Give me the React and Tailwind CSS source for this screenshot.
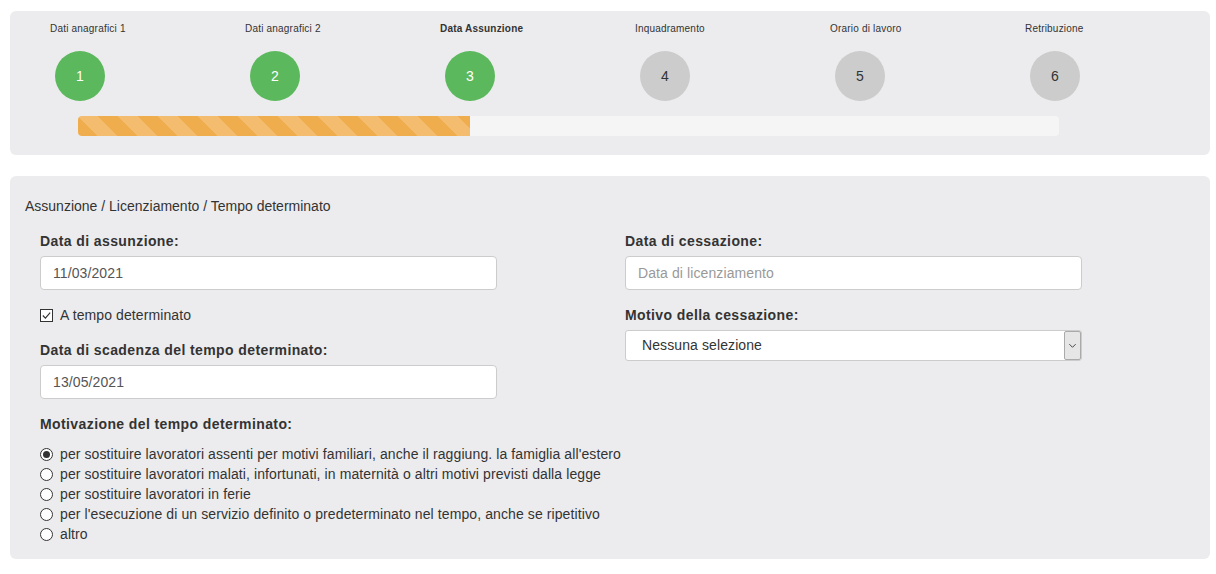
import React from 'react';

const steps = [
  { n: 1, label: 'Dati anagrafici 1', done: true },
  { n: 2, label: 'Dati anagrafici 2', done: true },
  { n: 3, label: 'Data Assunzione', done: true, active: true },
  { n: 4, label: 'Inquadramento' },
  { n: 5, label: 'Orario di lavoro' },
  { n: 6, label: 'Retribuzione' },
];

const motivi = [
  "per sostituire lavoratori assenti per motivi familiari, anche il raggiung. la famiglia all'estero",
  'per sostituire lavoratori malati, infortunati, in maternità o altri motivi previsti dalla legge',
  'per sostituire lavoratori in ferie',
  "per l'esecuzione di un servizio definito o predeterminato nel tempo, anche se ripetitivo",
  'altro',
];

function Radio({ checked }) {
  return (
    <span className="w-[13px] h-[13px] rounded-full border border-[#333] bg-white flex items-center justify-center shrink-0">
      {checked && <span className="w-[7px] h-[7px] rounded-full bg-[#333]" />}
    </span>
  );
}

function Field({ label, children }) {
  return (
    <div>
      <div className="text-[14px] leading-[20px] font-bold tracking-[0.4px] text-[#333] mb-[5px]">{label}</div>
      {children}
    </div>
  );
}

function TextBox({ value, placeholder }) {
  return (
    <div className="w-[457px] h-[34px] bg-white border border-[#ccc] rounded-[4px] px-[12px] flex items-center text-[14px] tracking-[0.1px]">
      {value ? <span className="text-[#555]">{value}</span> : <span className="text-[#999]">{placeholder}</span>}
    </div>
  );
}

export default function App() {
  return (
    <div className="min-h-screen bg-white px-[10px] pt-[11px] text-[#333]" style={{ fontFamily: '"Liberation Sans", Arial, sans-serif' }}>
      {/* Wizard steps */}
      <div className="w-[1200px] h-[144px] bg-[#ececee] rounded-[6px] pt-[11px]">
        <div className="flex pl-[40px]">
          {steps.map((s) => (
            <div key={s.n} className="w-[195px] shrink-0">
              <div className={`text-[10px] leading-[14px] tracking-[0.2px] ${s.active ? 'font-bold text-[#333]' : 'text-[#333]'}`}>{s.label}</div>
              <div
                className={`ml-[5px] mt-[15px] w-[50px] h-[50px] rounded-full flex items-center justify-center text-[14px] ${s.done ? 'bg-[#5cb85c] text-white' : 'bg-[#cccccc] text-[#333]'}`}
              >
                {s.n}
              </div>
            </div>
          ))}
        </div>
        <div className="ml-[68px] mt-[15px] w-[981px] h-[20px] bg-[#f5f5f5] rounded-[4px] overflow-hidden">
          <div className="h-full w-[40%] bg-[#f0ad4e] bg-[linear-gradient(45deg,rgba(255,255,255,.18)_25%,transparent_25%,transparent_50%,rgba(255,255,255,.18)_50%,rgba(255,255,255,.18)_75%,transparent_75%,transparent)] bg-size-[40px_40px]" />
        </div>
      </div>

      {/* Form panel */}
      <div className="w-[1200px] mt-[21px] bg-[#ececee] rounded-[6px] px-[15px] pt-[20px] pb-[15px]">
        <div className="text-[14px] leading-[20px] text-[#333]">Assunzione / Licenziamento / Tempo determinato</div>
        <div className="flex mt-[15px]">
          <div className="w-[585px] pl-[15px] flex flex-col gap-[15px]">
            <Field label="Data di assunzione:">
              <TextBox value="11/03/2021" />
            </Field>
            <div className="flex items-center gap-[7px] text-[14px] leading-[20px] tracking-[0.1px]">
              <span className="w-[13px] h-[13px] border border-[#333] bg-white flex items-center justify-center">
                <svg viewBox="0 0 12 12" className="w-[11px] h-[11px]">
                  <path d="M2 6 L4.8 8.8 L10 2.8" fill="none" stroke="#333" strokeWidth="1.3" />
                </svg>
              </span>
              <span>A tempo determinato</span>
            </div>
            <Field label="Data di scadenza del tempo determinato:">
              <TextBox value="13/05/2021" />
            </Field>
            <div>
              <div className="text-[14px] leading-[20px] font-bold tracking-[0.4px] text-[#333] mb-[10px]">Motivazione del tempo determinato:</div>
              {motivi.map((m, i) => (
                <div key={i} className="flex items-center gap-[7px] text-[14px] leading-[20px] tracking-[0.1px] whitespace-nowrap">
                  <Radio checked={i === 0} />
                  <span>{m}</span>
                </div>
              ))}
            </div>
          </div>
          <div className="w-[585px] pl-[15px] flex flex-col gap-[15px]">
            <Field label="Data di cessazione:">
              <TextBox placeholder="Data di licenziamento" />
            </Field>
            <Field label="Motivo della cessazione:">
              <div className="w-[457px] h-[31px] bg-white border border-[#ccc] rounded-[3px] flex items-center text-[14px] tracking-[0.1px]">
                <span className="flex-1 pl-[16px] text-[#333]">Nessuna selezione</span>
                <span className="w-[17px] h-[29px] border border-[#aaa] bg-[#e6e6e6] flex items-center justify-center rounded-[2px]">
                  <svg viewBox="0 0 10 10" className="w-[9px] h-[9px]">
                    <path d="M1.5 3.5 L5 7 L8.5 3.5" fill="none" stroke="#444" strokeWidth="1.1" />
                  </svg>
                </span>
              </div>
            </Field>
          </div>
        </div>
      </div>
    </div>
  );
}
